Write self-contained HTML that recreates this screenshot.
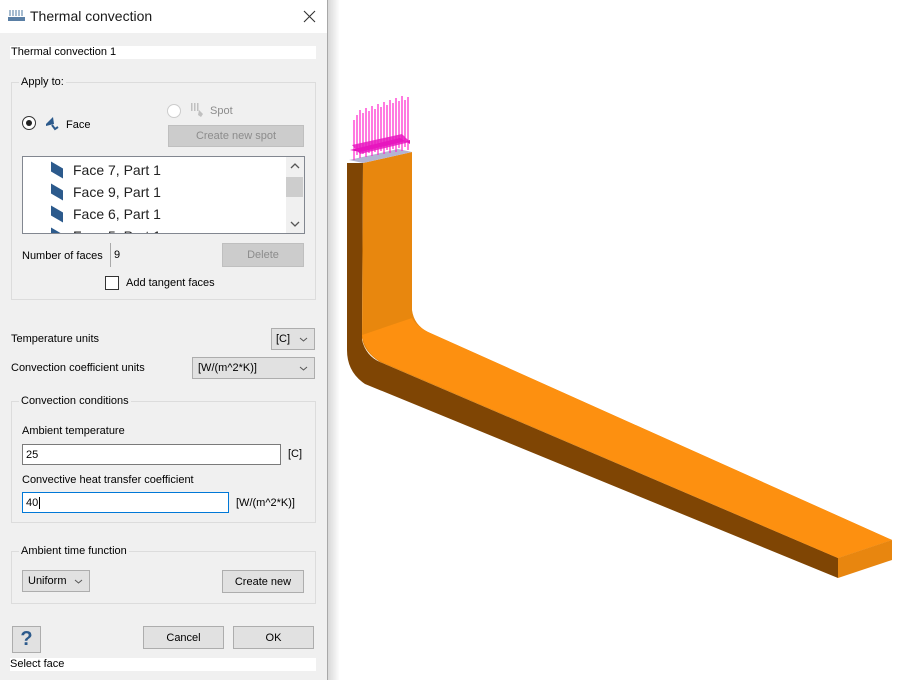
<!DOCTYPE html>
<html><head><style>
*{margin:0;padding:0;box-sizing:border-box}
body{width:910px;height:680px;background:#fff;position:relative;overflow:hidden;font-family:"Liberation Sans",sans-serif;font-size:11px;color:#000}
.a{position:absolute}
#dlg{left:0;top:0;width:328px;height:680px;background:#f0f0f0;border-right:1px solid #a8a8a8}
#shadow{left:328px;top:0;width:12px;height:680px;background:linear-gradient(to right,#d8d8d8,#fff)}
.grp{border:1px solid #dcdcdc}
.lbl{background:#f0f0f0;padding:0 2px}
.btn{background:#e1e1e1;border:1px solid #adadad;text-align:center}
.dis{background:#cccccc;border:1px solid #bfbfbf;color:#8c8c8c;text-align:center}
.inp{background:#fff;border:1px solid #7a7a7a}
.sel{background:#e1e1e1;border:1px solid #adadad}
.chev{position:absolute;right:6px;top:8px}
</style></head><body>
<div id="dlg" class="a">
 <div class="a" style="left:0;top:0;width:327px;height:33px;background:#fff"></div>
 <svg class="a" style="left:8px;top:10px" width="17" height="12" viewBox="0 0 17 12"><g stroke="#6a8fb0" stroke-width="1.2"><line x1="2" y1="0" x2="2" y2="6"/><line x1="5" y1="0" x2="5" y2="6"/><line x1="8" y1="0" x2="8" y2="6"/><line x1="11" y1="0" x2="11" y2="6"/><line x1="14" y1="0" x2="14" y2="6"/></g><rect x="0" y="7" width="17" height="4" fill="#5a7fa5"/></svg>
 <div class="a" style="left:30px;top:8px;font-size:14px;color:#1a1a1a">Thermal convection</div>
 <svg class="a" style="left:303px;top:10px" width="13" height="13" viewBox="0 0 13 13"><path d="M1 1L12 12M12 1L1 12" stroke="#333" stroke-width="1.1"/></svg>
 <div class="a" style="left:10px;top:46px;width:306px;height:13px;background:#fff;padding-left:1px">Thermal convection 1</div>
 <div class="a grp" style="left:11px;top:82px;width:305px;height:218px"></div>
 <div class="a lbl" style="left:19px;top:76px">Apply to:</div>
 <div class="a" style="left:22px;top:116px;width:14px;height:14px;border:1px solid #333;border-radius:50%;background:#fff"></div>
 <div class="a" style="left:26px;top:120px;width:6px;height:6px;border-radius:50%;background:#222"></div>
 <svg class="a" style="left:44px;top:115px" width="16" height="17" viewBox="0 0 16 17"><path d="M2 9 L9 2 L10 9 L2 11Z" fill="#2c5a8c"/><path d="M8 10 L11 14 L14 12" fill="none" stroke="#2c5a8c" stroke-width="2"/></svg>
 <div class="a" style="left:66px;top:119px">Face</div>
 <div class="a" style="left:167px;top:104px;width:14px;height:14px;border:1px solid #ccc;border-radius:50%;background:#fff"></div>
 <svg class="a" style="left:190px;top:102px" width="14" height="16" viewBox="0 0 14 16"><g fill="#c0c0c0"><rect x="1" y="1" width="1.5" height="8"/><rect x="4" y="1" width="1.5" height="8"/><rect x="7" y="1" width="1.5" height="8"/><path d="M9 8 L13 12 L11 15 L8 13Z"/></g></svg>
 <div class="a" style="left:210px;top:105px;color:#8c8c8c">Spot</div>
 <div class="a dis" style="left:168px;top:125px;width:136px;height:22px;line-height:20px">Create new spot</div>
 <div class="a inp" style="left:22px;top:156px;width:283px;height:78px;border-color:#828790;overflow:hidden">
  <div class="a" style="left:263px;top:0;width:18px;height:76px;background:#f0f0f0"></div>
  <div class="a" style="left:263px;top:20px;width:17px;height:20px;background:#cdcdcd"></div>
  <svg class="a" style="left:267px;top:6px" width="10" height="6"><path d="M1 5L5 1L9 5" fill="none" stroke="#555" stroke-width="1.3"/></svg>
  <svg class="a" style="left:267px;top:64px" width="10" height="6"><path d="M1 1L5 5L9 1" fill="none" stroke="#555" stroke-width="1.3"/></svg>
  <div class="a" style="left:28px;top:2px;font-size:14px;line-height:22px;color:#222">
   <div><span style="display:inline-block;width:12px;height:10px;background:#2c5a8c;transform:skewY(30deg);margin-right:10px"></span>Face 7, Part 1</div>
   <div><span style="display:inline-block;width:12px;height:10px;background:#2c5a8c;transform:skewY(30deg);margin-right:10px"></span>Face 9, Part 1</div>
   <div><span style="display:inline-block;width:12px;height:10px;background:#2c5a8c;transform:skewY(30deg);margin-right:10px"></span>Face 6, Part 1</div>
   <div><span style="display:inline-block;width:12px;height:10px;background:#2c5a8c;transform:skewY(30deg);margin-right:10px"></span>Face 5, Part 1</div>
  </div>
 </div>
 <div class="a" style="left:22px;top:250px">Number of faces</div>
 <div class="a" style="left:110px;top:243px;width:13px;height:24px;border-left:1px solid #aaa;padding:6px 0 0 3px">9</div>
 <div class="a dis" style="left:222px;top:243px;width:82px;height:24px;line-height:22px">Delete</div>
 <div class="a" style="left:105px;top:276px;width:14px;height:14px;border:1px solid #333;background:#fff"></div>
 <div class="a" style="left:126px;top:277px">Add tangent faces</div>
 <div class="a" style="left:11px;top:333px">Temperature units</div>
 <div class="a sel" style="left:271px;top:328px;width:44px;height:22px;padding:4px 0 0 4px">[C]<svg class="chev" width="9" height="5"><path d="M1 1L4.5 4L8 1" fill="none" stroke="#555"/></svg></div>
 <div class="a" style="left:11px;top:362px">Convection coefficient units</div>
 <div class="a sel" style="left:192px;top:357px;width:123px;height:22px;padding:4px 0 0 5px">[W/(m^2*K)]<svg class="chev" width="9" height="5"><path d="M1 1L4.5 4L8 1" fill="none" stroke="#555"/></svg></div>
 <div class="a grp" style="left:11px;top:401px;width:305px;height:122px"></div>
 <div class="a lbl" style="left:19px;top:395px">Convection conditions</div>
 <div class="a" style="left:22px;top:425px">Ambient temperature</div>
 <div class="a inp" style="left:22px;top:444px;width:259px;height:21px;padding:4px 0 0 3px">25</div>
 <div class="a" style="left:288px;top:448px">[C]</div>
 <div class="a" style="left:22px;top:474px">Convective heat transfer coefficient</div>
 <div class="a inp" style="left:22px;top:492px;width:207px;height:21px;padding:4px 0 0 3px;border-color:#0078d7">40<span style="border-left:1px solid #000;margin-left:1px"></span></div>
 <div class="a" style="left:236px;top:497px">[W/(m^2*K)]</div>
 <div class="a grp" style="left:11px;top:551px;width:305px;height:53px"></div>
 <div class="a lbl" style="left:19px;top:545px">Ambient time function</div>
 <div class="a sel" style="left:22px;top:570px;width:68px;height:22px;padding:4px 0 0 5px">Uniform<svg class="chev" width="9" height="5"><path d="M1 1L4.5 4L8 1" fill="none" stroke="#555"/></svg></div>
 <div class="a btn" style="left:222px;top:570px;width:82px;height:23px;line-height:23px">Create new</div>
 <div class="a btn" style="left:12px;top:626px;width:29px;height:27px;font-size:20px;font-weight:bold;color:#2c5a8c;line-height:25px">?</div>
 <div class="a btn" style="left:143px;top:626px;width:81px;height:23px;line-height:22px">Cancel</div>
 <div class="a btn" style="left:233px;top:626px;width:81px;height:23px;line-height:22px">OK</div>
 <div class="a" style="left:10px;top:658px;width:306px;height:13px;background:#fff">Select face</div>
</div>
<div id="shadow" class="a"></div>
<svg class="a" style="left:0;top:0" width="910" height="680" viewBox="0 0 910 680">
 <path d="M347 163 L363 163 L362 340 Q366 356 380 362 L838 558 L838 578 L365 384 Q347 372 347 350 Z" fill="#7f4504"/>
 <path d="M363 163 L412 152 L412 310 Q414 325 428 332 L892 540 L838 558 L380 362 Q364 352 362 338 Z" fill="#e8870e"/>
 <path d="M362 335 Q366 354 382 362 L838 558 L892 540 L428 332 Q416 326 412 318 Z" fill="#fd9010"/>
 <path d="M838 558 L892 540 L892 560 L838 578 Z" fill="#e8860f"/>
 <path d="M349 160 L363 163 L412 152 L398 149 Z" fill="#b4b4d2"/>
 <g stroke="#ff22cc" stroke-width="1.2">
  <line x1="354" y1="120" x2="354" y2="160"/><line x1="360" y1="110" x2="360" y2="158"/><line x1="366" y1="108" x2="366" y2="157"/><line x1="372" y1="106" x2="372" y2="156"/><line x1="378" y1="104" x2="378" y2="155"/><line x1="384" y1="102" x2="384" y2="154"/><line x1="390" y1="100" x2="390" y2="153"/><line x1="396" y1="98" x2="396" y2="152"/><line x1="402" y1="96" x2="402" y2="151"/><line x1="408" y1="97" x2="408" y2="150"/>
  <line x1="357" y1="115" x2="357" y2="155"/><line x1="363" y1="113" x2="363" y2="154"/><line x1="369" y1="111" x2="369" y2="153"/><line x1="375" y1="109" x2="375" y2="152"/><line x1="381" y1="107" x2="381" y2="151"/><line x1="387" y1="105" x2="387" y2="150"/><line x1="393" y1="103" x2="393" y2="149"/><line x1="399" y1="101" x2="399" y2="148"/><line x1="405" y1="100" x2="405" y2="147"/>
 </g>
 <path d="M350 150 L400 138 L410 144 L410 140 L360 152 Z" fill="#e010b8"/>
 <path d="M352 145 L402 134 L410 142 L360 154 Z" fill="#e818c0" opacity="0.85"/>
</svg>
</body></html>
